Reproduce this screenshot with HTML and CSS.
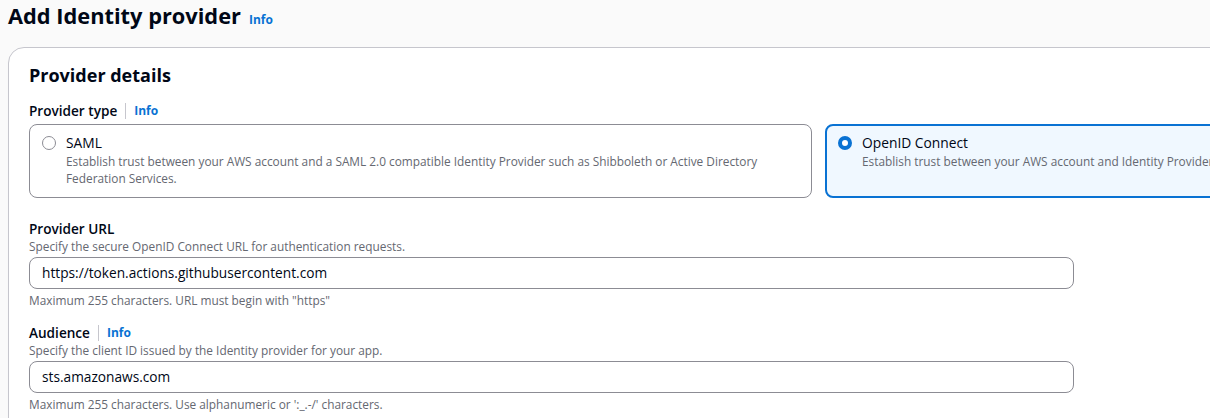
FILE: index.html
```html
<!DOCTYPE html>
<html lang="en">
<head>
<meta charset="utf-8">
<title>Add Identity provider</title>
<link rel="stylesheet" href="styles.css">
</head>
<body>
<div class="page">
  <header class="page-header">
    <h1 class="page-title">Add Identity provider</h1>
    <a class="info-link" href="#">Info</a>
  </header>
  <section class="card">
    <h2 class="card-title">Provider details</h2>

    <div class="field field-type">
      <div class="label-row">
        <span class="label">Provider type</span>
        <span class="divider"></span>
        <a class="info-link" href="#">Info</a>
      </div>
      <div class="tiles">
        <label class="tile">
          <span class="radio"></span>
          <span class="tile-text">
            <span class="tile-title">SAML</span>
            <span class="tile-desc">Establish trust between your AWS account and a SAML 2.0 compatible Identity Provider such as Shibboleth or Active Directory Federation Services.</span>
          </span>
        </label>
        <label class="tile tile-selected">
          <span class="radio radio-checked"></span>
          <span class="tile-text">
            <span class="tile-title">OpenID Connect</span>
            <span class="tile-desc">Establish trust between your AWS account and Identity Provider services, such as Google or Salesforce.</span>
          </span>
        </label>
      </div>
    </div>

    <div class="field">
      <div class="label-row"><span class="label">Provider URL</span></div>
      <div class="desc">Specify the secure OpenID Connect URL for authentication requests.</div>
      <div class="input">https://token.actions.githubusercontent.com</div>
      <div class="hint">Maximum 255 characters. URL must begin with "https"</div>
    </div>

    <div class="field">
      <div class="label-row">
        <span class="label">Audience</span>
        <span class="divider"></span>
        <a class="info-link" href="#">Info</a>
      </div>
      <div class="desc">Specify the client ID issued by the Identity provider for your app.</div>
      <div class="input">sts.amazonaws.com</div>
      <div class="hint">Maximum 255 characters. Use alphanumeric or ':_.-/' characters.</div>
    </div>
  </section>
</div>
</body>
</html>
```
FILE: styles.css
```css
html, body {
  margin: 0;
  padding: 0;
}
body {
  background: #fafafa;
  font-family: "Open Sans", "Noto Sans", sans-serif;
  color: #000716;
  overflow: hidden;
  width: 1210px;
  height: 418px;
}
.page {
  padding: 0 0 0 8px;
}
.page-header {
  display: flex;
  align-items: baseline;
  gap: 8px;
  height: 47px;
  padding-top: 2px;
  box-sizing: border-box;
}
.page-title {
  margin: 0;
  font-size: 21.8px;
  line-height: 28px;
  font-weight: 700;
}
.info-link {
  color: #0972d3;
  font-size: 12px;
  font-weight: 700;
  text-decoration: none;
}
.card {
  width: 1621px;
  background: #fff;
  border: 1px solid #c6c6cd;
  border-radius: 16px;
  box-sizing: border-box;
  padding: 15px 20px 20px 20px;
  box-shadow: 0 1px 1px rgba(0, 7, 22, 0.05);
}
.card-title {
  margin: 0 0 14px;
  font-size: 18px;
  line-height: 24px;
  font-weight: 700;
}
.field {
  display: flex;
  flex-direction: column;
  margin-bottom: 15px;
}
.field-type {
  margin-bottom: 21px;
}
.label-row {
  display: flex;
  align-items: center;
  height: 19px;
}
.label {
  font-size: 13.6px;
  line-height: 19px;
  font-weight: 650;
}
.divider {
  width: 1px;
  height: 16px;
  background: #c6c6cd;
  margin: 0 8px 0 8px;
}
.field-type .label-row {
  margin-bottom: 4px;
}
.tiles {
  display: flex;
  gap: 13px;
}
.tile {
  flex: 0 0 783px;
  box-sizing: border-box;
  display: flex;
  gap: 10px;
  align-items: flex-start;
  border: 1px solid #8c8c94;
  border-radius: 8px;
  padding: 8px 12px 12px 12px;
  height: 74px;
  background: #fff;
}
.tile-selected {
  border: 2px solid #0972d3;
  padding: 7px 11px 11px 11px;
  background: #f0f8ff;
}
.radio {
  flex: none;
  width: 14px;
  height: 14px;
  box-sizing: border-box;
  border-radius: 50%;
  border: 1px solid #8c8c94;
  background: #fff;
  margin-top: 3px;
}
.radio-checked {
  border: 4px solid #0972d3;
}
.tile-text {
  display: flex;
  flex-direction: column;
}
.tile-title {
  font-size: 13.8px;
  line-height: 20px;
}
.tile-desc {
  font-size: 11.85px;
  line-height: 16.5px;
  color: #656871;
}
.desc {
  font-size: 11.85px;
  line-height: 16px;
  color: #656871;
  margin-bottom: 3px;
}
.input {
  width: 1045px;
  height: 32px;
  box-sizing: border-box;
  border: 1px solid #8c8c94;
  border-radius: 8px;
  padding: 0 12px;
  font-size: 13.7px;
  line-height: 30px;
  background: #fff;
}
.hint {
  font-size: 11.85px;
  line-height: 16px;
  color: #656871;
  margin-top: 3px;
}
```
